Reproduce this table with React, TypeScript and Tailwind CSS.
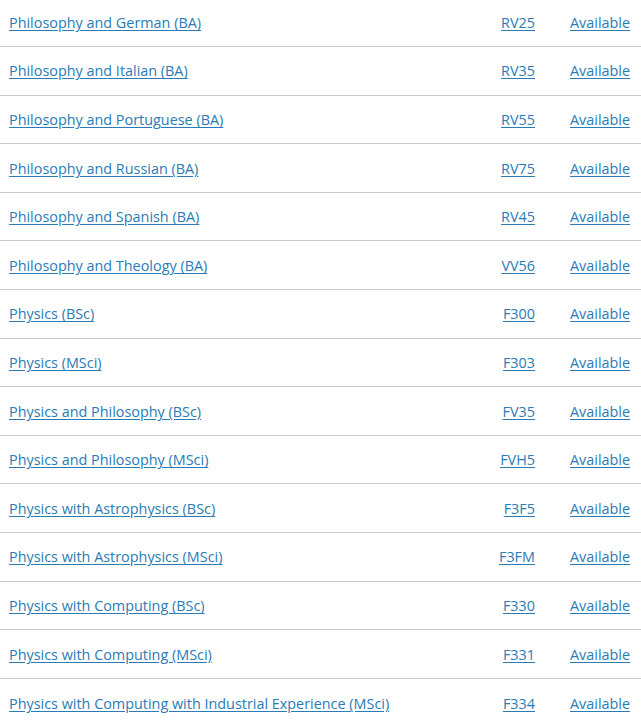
import React from "react";

const rows: [string, string][] = [
  ["Philosophy and German (BA)", "RV25"],
  ["Philosophy and Italian (BA)", "RV35"],
  ["Philosophy and Portuguese (BA)", "RV55"],
  ["Philosophy and Russian (BA)", "RV75"],
  ["Philosophy and Spanish (BA)", "RV45"],
  ["Philosophy and Theology (BA)", "VV56"],
  ["Physics (BSc)", "F300"],
  ["Physics (MSci)", "F303"],
  ["Physics and Philosophy (BSc)", "FV35"],
  ["Physics and Philosophy (MSci)", "FVH5"],
  ["Physics with Astrophysics (BSc)", "F3F5"],
  ["Physics with Astrophysics (MSci)", "F3FM"],
  ["Physics with Computing (BSc)", "F330"],
  ["Physics with Computing (MSci)", "F331"],
  ["Physics with Computing with Industrial Experience (MSci)", "F334"],
];

export default function App() {
  return (
    <div
      className="w-[641px] h-[725px] overflow-hidden bg-white text-[14.4px] text-[#2a7bb6]"
      style={{ fontFamily: '"Open Sans", sans-serif' }}
    >
      <div className="mt-[-1.6px]">
        {rows.map(([name, code], i) => (
          <div
            key={code}
            className={`flex items-center h-[48.6px] pl-[9px] pt-[1px] ${i < rows.length - 1 ? "border-b border-[#cccccc]" : ""}`}
          >
            <a href="#" className="flex-1 underline underline-offset-2">
              {name}
            </a>
            <div className="w-[80px] text-right">
              <a href="#" className="underline underline-offset-2">
                {code}
              </a>
            </div>
            <div className="w-[106px] pl-[35px]">
              <a href="#" className="underline underline-offset-2">
                Available
              </a>
            </div>
          </div>
        ))}
      </div>
    </div>
  );
}
